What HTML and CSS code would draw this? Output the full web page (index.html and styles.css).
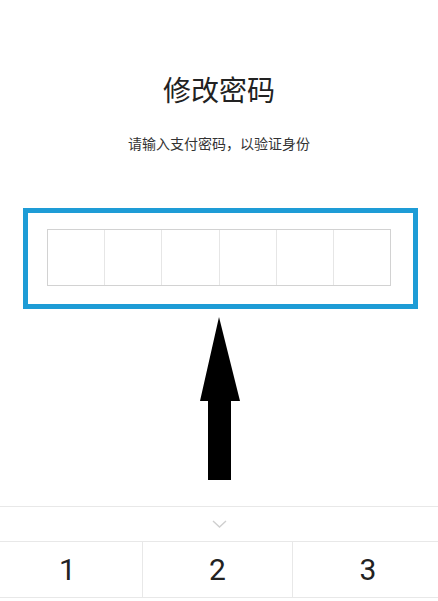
FILE: index.html
```html
<!DOCTYPE html>
<html lang="zh">
<head>
<meta charset="utf-8">
<title>修改密码</title>
<link rel="stylesheet" href="styles.css">
</head>
<body>
<div class="page">
  <h1 class="title">修改密码</h1>
  <p class="subtitle">请输入支付密码，以验证身份</p>
  <div class="highlight">
    <div class="cells">
      <span class="cell"></span><span class="cell"></span><span class="cell"></span><span class="cell"></span><span class="cell"></span><span class="cell"></span>
    </div>
  </div>
  <svg class="arrow" width="40" height="164" viewBox="0 0 40 164">
    <polygon points="19,0 40,84 31,84 31,163 8,163 8,84 0,84" fill="#000"/>
  </svg>
  <div class="keyboard">
    <div class="kb-toggle">
      <svg width="15" height="8" viewBox="0 0 15 8"><polyline points="1,1 7.5,7 14,1" fill="none" stroke="#cfcfcf" stroke-width="1.4"/></svg>
    </div>
    <div class="keys">
      <div class="key">1</div>
      <div class="key">2</div>
      <div class="key">3</div>
    </div>
  </div>
</div>
</body>
</html>
```
FILE: styles.css
```css
html, body {
  margin: 0;
  padding: 0;
  background: #fff;
}
body {
  font-family: "Noto Sans CJK SC", "Noto Sans", sans-serif;
  overflow: hidden;
}
.page {
  width: 438px;
  height: 601px;
  overflow: hidden;
}
.title {
  margin: 69px 0 0;
  font-size: 28px;
  line-height: 40px;
  font-weight: 400;
  color: #222;
  text-align: center;
}
.subtitle {
  margin: 24px 0 0;
  font-size: 14px;
  line-height: 20px;
  color: #333;
  text-align: center;
}
.highlight {
  box-sizing: border-box;
  width: 395px;
  height: 101px;
  margin: 55px 0 0 23px;
  border: 5px solid #1e9cd6;
  padding: 16px 22px 18px 19px;
}
.cells {
  box-sizing: border-box;
  display: flex;
  width: 344px;
  height: 57px;
  border: 1px solid #d2d2d2;
}
.cell {
  flex: 1;
}
.cell + .cell {
  border-left: 1px solid #e6e6e6;
}
.arrow {
  display: block;
  margin: 8px 0 0 200px;
}
.keyboard {
  margin-top: 25px;
  border-top: 1px solid #e8e8e8;
}
.kb-toggle {
  height: 34px;
  display: flex;
  align-items: center;
  justify-content: center;
  border-bottom: 1px solid #e8e8e8;
}
.kb-toggle svg {
  margin-left: 1px;
}
.keys {
  display: flex;
  margin-left: -7px;
  height: 55px;
  border-bottom: 1px solid #e8e8e8;
}
.key {
  box-sizing: border-box;
  width: 150px;
  flex: none;
  display: flex;
  align-items: center;
  justify-content: center;
  font-family: Roboto, "Noto Sans", sans-serif;
  font-size: 30px;
  color: #222;
}
.key:nth-child(1), .key:nth-child(2) {
  border-right: 1px solid #e8e8e8;
}
```
